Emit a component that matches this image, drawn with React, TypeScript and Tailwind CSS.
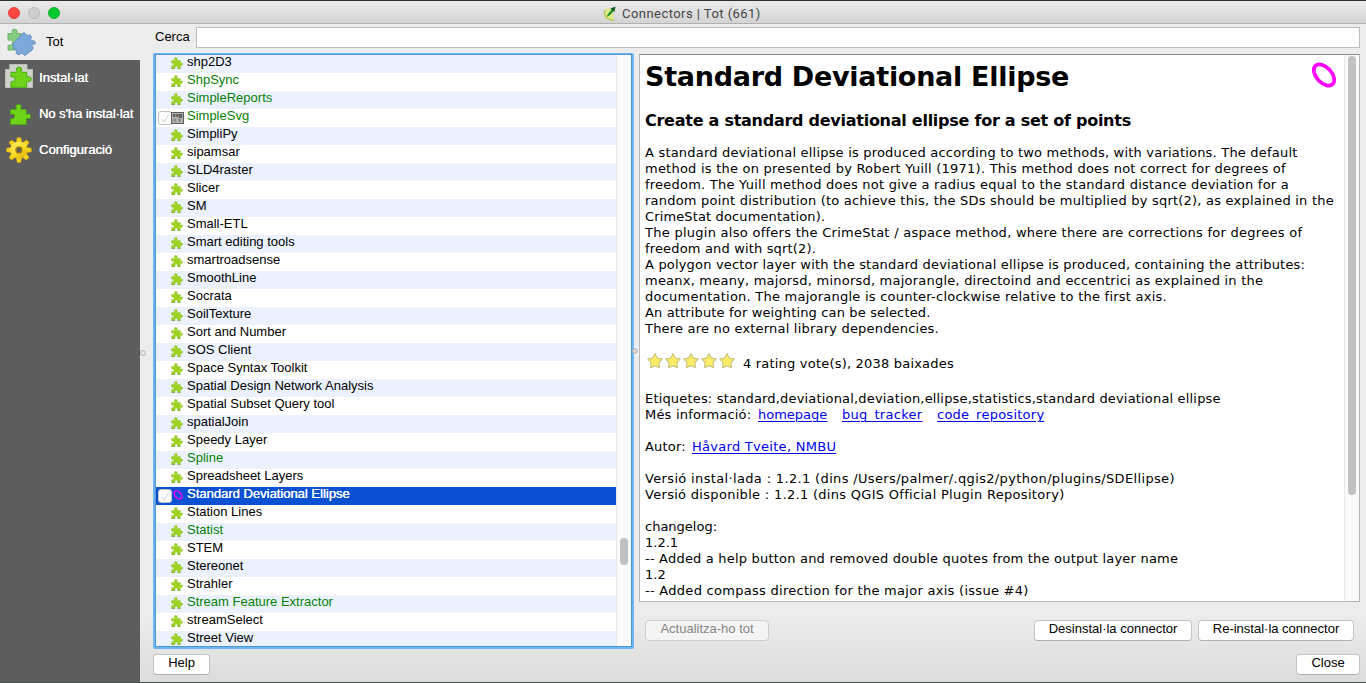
import React from "react";

type Plugin = { name: string; green?: boolean; check?: "svg" | "ellipse" };

const plugins: Plugin[] = [
  { name: "shp2D3" },
  { name: "ShpSync", green: true },
  { name: "SimpleReports", green: true },
  { name: "SimpleSvg", green: true, check: "svg" },
  { name: "SimpliPy" },
  { name: "sipamsar" },
  { name: "SLD4raster" },
  { name: "Slicer" },
  { name: "SM" },
  { name: "Small-ETL" },
  { name: "Smart editing tools" },
  { name: "smartroadsense" },
  { name: "SmoothLine" },
  { name: "Socrata" },
  { name: "SoilTexture" },
  { name: "Sort and Number" },
  { name: "SOS Client" },
  { name: "Space Syntax Toolkit" },
  { name: "Spatial Design Network Analysis" },
  { name: "Spatial Subset Query tool" },
  { name: "spatialJoin" },
  { name: "Speedy Layer" },
  { name: "Spline", green: true },
  { name: "Spreadsheet Layers" },
  { name: "Standard Deviational Ellipse", check: "ellipse" },
  { name: "Station Lines" },
  { name: "Statist", green: true },
  { name: "STEM" },
  { name: "Stereonet" },
  { name: "Strahler" },
  { name: "Stream Feature Extractor", green: true },
  { name: "streamSelect" },
  { name: "Street View" },
];

const PIECE =
  "M0.500 5.500 H5.500 C6.800 5.500 6.600 4.600 6.200 3.600 C5.400 1.600 6.800 0.400 8.600 0.400 C10.600 0.400 11.800 1.600 11 3.600 C10.600 4.600 10.600 5.500 12 5.500 H16.200 V9.400 C16.200 10.600 17 10.400 18 10 C19.600 9.400 20.700 10.600 20.700 12.400 C20.700 14.200 19.400 15.200 17.800 14.700 C16.800 14.400 16.200 14.400 16.200 15.600 V20.500 H0.500 V15.600 C0.500 14.400 1.400 14.600 2.300 14.700 C4 14.800 4.600 13.600 4.600 12.200 C4.600 10.600 3.600 9.800 2.200 10.200 C1.200 10.500 0.500 10.400 0.500 9.200 Z";

function SmallPiece() {
  return (
    <svg className="h-[12px] w-[12px] shrink-0" viewBox="0 0 12 12">
      <path
        d="M0.600 3.400 H3.600 C4.200 3.200 3.200 2.200 3.400 1.500 C3.700 0.300 6 0.300 6.300 1.500 C6.500 2.300 5.500 3.100 6.200 3.400 H9.300 V5.900 C9.500 6.500 10.200 5.700 10.900 5.900 C11.900 6.200 11.900 8.200 10.900 8.500 C10.200 8.700 9.500 8 9.300 8.600 V11.400 H6.700 C6.200 11.100 6.900 10.400 6.500 9.700 C6.100 9.100 4.300 9.100 4 9.800 C3.700 10.500 4.400 11.100 3.900 11.400 H0.600 V8.900 C0.900 8.300 1.700 8.900 2.400 8.500 C3 8 3 6.600 2.400 6.200 C1.700 5.800 0.900 6.500 0.600 6 Z"
        fill="#9ed41d"
        stroke="#93bd45"
        strokeWidth="0.5"
      />
      <path d="M0.600 11.400 H3.900 M6.700 11.400 H9.300" stroke="#7f9f4c" strokeWidth="0.9" />
    </svg>
  );
}

function EllipseIcon({ className }: { className: string }) {
  return (
    <svg className={className} viewBox="0 0 26 26">
      <ellipse cx="13" cy="13" rx="12.600" ry="7.600" transform="rotate(47 13 13)" fill="none" stroke="#ff00ff" strokeWidth="3.700" />
    </svg>
  );
}

function CheckBox() {
  return (
    <span className="flex h-[14px] w-[14px] shrink-0 items-center justify-center rounded-[3px] border border-[#c2c2c2] bg-[#fdfdfd]">
      <svg className="h-[10px] w-[10px]" viewBox="0 0 10 10">
        <path d="M1.500 6 L4 9 L8.500 2" fill="none" stroke="#cfcfcf" strokeWidth="1" />
      </svg>
    </span>
  );
}

function PluginRow({ plugin, index }: { plugin: Plugin; index: number }) {
  const selected = plugin.check === "ellipse";
  const bg = selected ? "bg-[#0a50d2]" : index % 2 === 0 ? "bg-[#ebf2fe]" : "bg-white";
  const color = selected
    ? "text-white [text-shadow:0.3px_0_0_#fff]"
    : plugin.green
      ? "text-[#078007]"
      : "text-black";
  return (
    <li className={`flex h-[18px] shrink-0 pl-[2px] ${bg}`}>
      <span className="flex w-[13px] shrink-0 pt-[2px]">{plugin.check && <CheckBox />}</span>
      <span className="flex w-[16px] shrink-0 pt-[2px]">
        {plugin.check === "svg" ? (
          <svg className="mt-px h-[12px] w-[13px]" viewBox="0 0 13 12">
            <rect x="0.500" y="0.500" width="12" height="11" fill="#b1b1b1" stroke="#606060" />
            <text x="1.800" y="5.200" fontSize="5.500" fontWeight="700" fontFamily="DejaVu Sans" fill="#333" textLength="9.400" lengthAdjust="spacingAndGlyphs">svg</text>
            <path d="M5 6.800 L2.500 8.200 L5 9.600 M7 6.800 L9.500 8.200 L7 9.600" fill="none" stroke="#666" strokeWidth="0.700" />
          </svg>
        ) : selected ? (
          <EllipseIcon className="mt-px ml-[2px] h-[10px] w-[10px] overflow-visible" />
        ) : (
          <SmallPiece />
        )}
      </span>
      <span className={`text-[13px] leading-[14px] whitespace-nowrap ${color}`}>{plugin.name}</span>
    </li>
  );
}

function AllIcon() {
  return (
    <svg className="h-[28px] w-[30px]" viewBox="0 0 30 28">
      <path
        d="M2 5.500 H6 C7 5.200 5.500 3.500 6.300 2.200 C7.200 1 10.200 1 10.900 2.300 C11.600 3.600 10.200 5 11 5.500 H15 V22 H2 V17.500 C3 16.600 4.500 17.800 5.800 16.800 C6.900 15.800 6.900 13.200 5.600 12.400 C4.300 11.600 3 12.800 2 12 Z"
        fill="#82cd80"
        stroke="#66ad66"
        strokeWidth="0.900"
      />
      <path
        d="M6.500 16.200 L16.800 5.200 Q18 4.200 19.200 5.400 L21.400 7.600 C22.400 8 22 6.600 23.400 6.800 C25.200 7.200 25.800 9 25 10.400 C24.400 11.600 24.800 12.200 26 12.600 L29 13.400 L29.200 15.800 C28 16.400 26.600 16 26 17 C25.600 18 27.400 19 27.200 20.600 L24.600 23.400 C23.400 23.400 22.600 23.600 22.600 25 C21.600 25.400 20.800 26.200 19 27.400 C17.600 26.800 17 25.400 15.600 25.400 C14.400 25.600 13.600 27 11.800 26.600 C10.400 26.200 9.800 24.800 10.600 23.400 C11.200 22 10 21.400 8.800 21.200 C7.200 21 6.600 19.600 7.600 18.600 Z"
        fill="#7da8da"
        stroke="#5e89c0"
        strokeWidth="0.900"
      />
    </svg>
  );
}

function InstalledIcon() {
  return (
    <svg className="-mt-[4px] h-[24px] w-[28px]" viewBox="0 0 28 24">
      <path d="M4.700 0.500 H22 V5.500 H27.500 V23.500 H0.500 V5.500 H4.700 Z" fill="#ced2ca" stroke="#b9beb6" />
      <g transform="translate(5.500 2.800)">
        <path d={PIECE} fill="#6fd31a" stroke="#45a80e" strokeWidth="1" />
      </g>
    </svg>
  );
}

function Gear() {
  const teeth = [0, 45, 90, 135, 180, 225, 270, 315];
  return (
    <svg className="h-[28px] w-[28px]" viewBox="0 0 28 28">
      <defs>
        <linearGradient id="gold" x1="0" y1="0" x2="0.7" y2="1">
          <stop offset="0" stopColor="#fff06a" />
          <stop offset="0.6" stopColor="#f8dc26" />
          <stop offset="1" stopColor="#e3b208" />
        </linearGradient>
      </defs>
      <g fill="#f4d320" stroke="#c99a10" strokeWidth="0.6">
        {teeth.map((a) => (
          <path key={a} d="M11.200 6.500 L12.200 1.600 H15.800 L16.800 6.500 Z" transform={`rotate(${a} 14 14)`} />
        ))}
      </g>
      <circle cx="14" cy="14" r="8.600" fill="url(#gold)" />
      <circle cx="14" cy="14" r="3" fill="#5c5c5c" stroke="#a87f14" strokeWidth="1.300" />
    </svg>
  );
}

function Star() {
  return (
    <svg className="h-[18px] w-[18px]" viewBox="0 0 18 18">
      <path
        d="M9 1.700 L11.400 6.100 L16.200 7 L12.900 10.700 L13.500 15.700 L9 13.700 L4.500 15.700 L5.100 10.700 L1.800 7 L6.600 6.100 Z"
        fill="#fbee66"
        stroke="#c6bf80"
        strokeWidth="1.100"
        strokeLinejoin="round"
      />
    </svg>
  );
}

function Line({ children, className = "" }: { children?: React.ReactNode; className?: string }) {
  return <div className={`h-4 whitespace-pre ${className}`}>{children}</div>;
}

function Link({ children, className = "" }: { children: string; className?: string }) {
  return <a className={`text-[#0000ee] underline decoration-1 underline-offset-2 ${className}`}>{children}</a>;
}

function Button({ children, className }: { children: string; className: string }) {
  return (
    <button className={`h-[21px] rounded-[4px] border pb-[3px] text-[13px] leading-[16px] whitespace-nowrap ${className}`}>
      {children}
    </button>
  );
}

const normal = "border-[#c3c3c3] border-b-[#b0b0b0] bg-white text-black";

export default function App() {
  return (
    <div className="flex h-[683px] w-[1366px] flex-col overflow-hidden border-t border-[#28332d] bg-[#ececec] font-['Liberation_Sans',sans-serif] text-[13px]">
      <header className="flex h-[23px] shrink-0 items-center border-b border-[#b1b1b1] bg-linear-to-b from-[#ebebeb] to-[#d3d3d3]">
        <div className="flex gap-2 pt-px pl-2">
          <span className="h-3 w-3 rounded-full border border-[#e33e3b] bg-[#fc4642]" />
          <span className="h-3 w-3 rounded-full border border-[#bcbcbc] bg-[#cfcfcf]" />
          <span className="h-3 w-3 rounded-full border border-[#0fae2a] bg-[#05c92f]" />
        </div>
        <div className="flex items-center pt-[3px] pl-[543px]">
          <svg className="h-[16px] w-[14px]" viewBox="0 0 14 16">
            <path d="M1.500 4 C3 2.200 5 2.500 8 3 L10.500 8 L10 12 L11.500 14.500 H8 L6 13.500 C3 14 1.500 12 1.500 9 Z" fill="#dfe98a" />
            <path d="M2 4 L1.500 8 L3.500 12 L6.500 13.500 L11 14.500" stroke="#b9c857" strokeWidth="1.300" fill="none" />
            <path d="M3.500 11 L5 8 L9.500 2.500 L11.500 4 L7 9 Z" fill="#1b8a2b" />
            <path d="M7.500 2.500 L12.500 0.500 L11.500 6 Z" fill="#145c20" />
          </svg>
          <span className="pl-[5px] font-['Roboto',sans-serif] text-[13px] tracking-[0.45px] whitespace-nowrap text-[#454545]">Connectors | Tot (661)</span>
        </div>
      </header>

      <div className="flex h-[658px] shrink-0">
        <nav className="flex w-[140px] shrink-0 flex-col bg-[#5d5d5d] text-white [text-shadow:0.3px_0_0_currentColor]">
          <div className="flex h-9 items-center bg-[#ececec] pl-[6px] text-black [text-shadow:none]">
            <AllIcon />
            <span className="pl-[10px]">Tot</span>
          </div>
          <div className="flex h-9 items-center pl-[5px]">
            <InstalledIcon />
            <span className="pl-[6px]">Instal·lat</span>
          </div>
          <div className="flex h-9 items-center pl-[10px]">
            <svg className="h-[21px] w-[21px]" viewBox="0 0 21 21">
              <path d={PIECE} fill="#6fd31a" stroke="#45a80e" strokeWidth="0.800" />
            </svg>
            <span className="pl-[8px] tracking-[-0.08px] whitespace-nowrap">No s'ha instal·lat</span>
          </div>
          <div className="flex h-9 items-center pl-[5px]">
            <Gear />
            <span className="pl-[6px]">Configuració</span>
          </div>
        </nav>

        <div className="flex w-[13px] shrink-0 flex-col bg-linear-to-b from-[#ececec] from-90% to-[#dcdcdc] pt-[326px]">
          <span className="h-[6px] w-[6px] rounded-full border border-[#b5b5b5] bg-[#e8e8e8]" />
        </div>

        <main className="flex w-[1213px] shrink-0 flex-col bg-linear-to-b from-[#ececec] from-90% to-[#dcdcdc]">
          <div className="flex h-[29px] shrink-0 pt-[3px]">
            <label className="w-[43px] shrink-0 pt-[2px] pl-[2px] leading-[16px]">Cerca</label>
            <div className="h-[21px] w-[1164px] border border-[#bdbdbd] bg-white" />
          </div>

          <div className="flex h-[596px] shrink-0">
            <div className="flex h-[596px] w-[481px] shrink-0 rounded-[2px] bg-[#6cb6f5] px-[2px] pt-px pb-[2px]">
              <div className="flex w-[477px] overflow-hidden border border-[#4c96d2] bg-white">
                <ul className="flex w-[460px] shrink-0 flex-col">
                  {plugins.map((p, i) => (
                    <PluginRow key={p.name} plugin={p} index={i} />
                  ))}
                </ul>
                <div className="flex w-[15px] justify-center border-l border-[#e8e8e8] bg-[#fafafa] pt-[483px]">
                  <span className="h-[27px] w-[8px] rounded-full bg-[#c1c1c1]" />
                </div>
              </div>
            </div>

            <div className="flex w-[5px] shrink-0 flex-col pt-[294px]">
              <span className="flex h-[8px] w-[5px] items-center bg-[#f8f8f8]">
                <span className="-ml-[2px] h-[6px] w-[6px] shrink-0 rounded-full border border-[#b0b0b0] bg-[#d5d5d5]" />
              </span>
            </div>

            <section className="flex w-[721px] shrink-0 flex-col">
              <div className="mt-px flex h-[548px] shrink-0 overflow-hidden border border-[#b5b5b5] border-t-[#8e8e8e] bg-white">
                <article className="flex w-[704px] shrink-0 flex-col pl-[5px] font-['DejaVu_Sans',sans-serif] text-[13px] leading-4 tracking-[0.2px] text-black">
                  <div className="flex h-[54px] shrink-0">
                    <h1 className="w-[666px] pt-[5px] text-[27px] leading-[34px] font-bold tracking-[-0.28px] whitespace-nowrap">
                      Standard Deviational Ellipse
                    </h1>
                    <EllipseIcon className="mt-[7px] h-[26px] w-[26px] overflow-visible" />
                  </div>
                  <h2 className="h-[36px] shrink-0 pt-[2px] text-[16px] leading-5 font-bold tracking-[-0.26px] whitespace-nowrap">
                    Create a standard deviational ellipse for a set of points
                  </h2>
                  <Line>A standard deviational ellipse is produced according to two methods, with variations. The default</Line>
                  <Line className="tracking-[0.23px]">method is the on presented by Robert Yuill (1971). This method does not correct for degrees of</Line>
                  <Line className="tracking-[0.23px]">freedom. The Yuill method does not give a radius equal to the standard distance deviation for a</Line>
                  <Line className="tracking-[0.217px]">random point distribution (to achieve this, the SDs should be multiplied by sqrt(2), as explained in the</Line>
                  <Line className="tracking-[0.13px]">CrimeStat documentation).</Line>
                  <Line className="tracking-[0.27px]">The plugin also offers the CrimeStat / aspace method, where there are corrections for degrees of</Line>
                  <Line className="tracking-[0.16px]">freedom and with sqrt(2).</Line>
                  <Line className="tracking-[0.18px]">A polygon vector layer with the standard deviational ellipse is produced, containing the attributes:</Line>
                  <Line className="tracking-[0.22px]">meanx, meany, majorsd, minorsd, majorangle, directoind and eccentrici as explained in the</Line>
                  <Line className="tracking-[0.24px]">documentation. The majorangle is counter-clockwise relative to the first axis.</Line>
                  <Line className="tracking-[0.15px]">An attribute for weighting can be selected.</Line>
                  <Line>There are no external library dependencies.</Line>
                  <div className="flex h-[54px] shrink-0 pt-[15px] pl-px">
                    <Star />
                    <Star />
                    <Star />
                    <Star />
                    <Star />
                    <span className="pt-[4px] pl-[7px] whitespace-nowrap">4 rating vote(s), 2038 baixades</span>
                  </div>
                  <Line className="tracking-[0.175px]">Etiquetes: standard,deviational,deviation,ellipse,statistics,standard deviational ellipse</Line>
                  <div className="flex h-4 whitespace-pre">
                    <span className="w-[113px]">Més informació: </span>
                    <span className="w-[84px]"><Link className="tracking-[0px]">homepage</Link></span>
                    <span className="w-[95px]"><Link className="tracking-[0.3px]">bug_tracker</Link></span>
                    <Link className="tracking-[0.25px]">code_repository</Link>
                  </div>
                  <Line />
                  <div className="flex h-4 whitespace-pre">
                    <span className="w-[47px]">Autor: </span>
                    <Link className="tracking-[0.28px]">Håvard Tveite, NMBU</Link>
                  </div>
                  <Line />
                  <Line className="tracking-[0.346px]">Versió instal·lada : 1.2.1 (dins /Users/palmer/.qgis2/python/plugins/SDEllipse)</Line>
                  <Line className="tracking-[0.3px]">Versió disponible : 1.2.1 (dins QGIS Official Plugin Repository)</Line>
                  <Line />
                  <Line className="tracking-[0px]">changelog:</Line>
                  <Line className="tracking-[0px]">1.2.1</Line>
                  <Line>-- Added a help button and removed double quotes from the output layer name</Line>
                  <Line className="tracking-[0px]">1.2</Line>
                  <Line className="tracking-[0.28px]">-- Added compass direction for the major axis (issue #4)</Line>
                </article>
                <div className="flex w-[15px] justify-center border-l border-[#e8e8e8] bg-[#fafafa] pt-px">
                  <span className="h-[439px] w-[8px] rounded-full bg-[#c1c1c1]" />
                </div>
              </div>
              <div className="flex pt-[18px] pl-[6px]">
                <Button className="w-[124px] border-[#cfcfcf] bg-[#f4f4f4] text-[#858585]">Actualitza-ho tot</Button>
                <Button className={`ml-[265px] w-[158px] ${normal}`}>Desinstal·la connector</Button>
                <Button className={`ml-[6px] w-[156px] ${normal}`}>Re-instal·la connector</Button>
              </div>
            </section>
          </div>

          <div className="flex justify-between pt-[5px] pr-[6px]">
            <Button className={`w-[57px] ${normal}`}>Help</Button>
            <Button className={`w-[64px] ${normal}`}>Close</Button>
          </div>
        </main>
      </div>
      <div className="h-px shrink-0 bg-[#43544d]" />
    </div>
  );
}
